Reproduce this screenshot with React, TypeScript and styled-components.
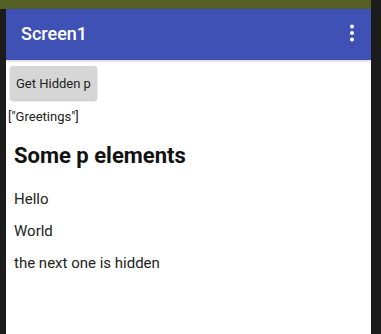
import React from 'react';
import styled, { createGlobalStyle } from 'styled-components';

const GlobalStyle = createGlobalStyle`
  html, body {
    margin: 0;
    padding: 0;
    background: #1c1c1c;
  }
  body {
    font-family: Roboto, "Liberation Sans", sans-serif;
  }
`;

const Frame = styled.div`
  width: 381px;
  height: 334px;
  display: flex;
  flex-direction: column;
  overflow: hidden;
`;

const StatusBar = styled.div`
  height: 9px;
  width: 371px;
  background: #556124;
  flex-shrink: 0;
`;

const Body = styled.div`
  flex: 1;
  display: flex;
  padding-left: 6px;
  padding-right: 10px;
`;

const Screen = styled.div`
  flex: 1;
  display: flex;
  flex-direction: column;
  background: #ffffff;
`;

const AppBar = styled.div`
  height: 51px;
  background: #3f51b5;
  display: flex;
  align-items: center;
  justify-content: space-between;
  padding: 0 16px 0 15px;
  box-shadow: 0 1px 3px rgba(0, 0, 0, 0.2);
  position: relative;
  z-index: 1;
`;

const Title = styled.span`
  color: #ffffff;
  font-size: 18px;
  font-weight: 500;
  padding-bottom: 2px;
`;

const MenuButton = styled.div`
  display: flex;
  align-items: center;
  padding-bottom: 3px;
`;

const Content = styled.div`
  flex: 1;
  padding: 6px 0 0 2px;
  color: #212121;
`;

const HiddenButton = styled.button`
  margin-left: 2px;
  height: 34px;
  padding: 0 6px;
  border: none;
  border-radius: 3px;
  background: #d6d6d6;
  box-shadow: 0 1px 2px rgba(0, 0, 0, 0.25);
  font-family: Roboto, "Liberation Sans", sans-serif;
  font-size: 13px;
  color: #222222;
`;

const Output = styled.div`
  font-size: 13px;
  color: #222222;
  margin-top: 9px;
`;

const Section = styled.div`
  padding-left: 6px;
`;

const Heading = styled.h2`
  margin: 19px 0 0;
  font-size: 22px;
  font-weight: 700;
  color: #111111;
  line-height: 26px;
`;

const Para = styled.p`
  margin: 0;
  font-size: 15px;
  line-height: 18px;
  color: #222222;
  margin-top: 14px;

  &:first-of-type {
    margin-top: 21px;
  }
`;

const Kebab = () => (
  <svg width="6" height="18" viewBox="0 0 6 18" fill="#ffffff">
    <circle cx="3" cy="2.5" r="2" />
    <circle cx="3" cy="9" r="2" />
    <circle cx="3" cy="15.5" r="2" />
  </svg>
);

export default function App() {
  return (
    <>
      <GlobalStyle />
      <Frame>
        <StatusBar />
        <Body>
          <Screen>
            <AppBar>
              <Title>Screen1</Title>
              <MenuButton>
                <Kebab />
              </MenuButton>
            </AppBar>
            <Content>
              <HiddenButton>Get Hidden p</HiddenButton>
              <Output>["Greetings"]</Output>
              <Section>
                <Heading>Some p elements</Heading>
                <Para>Hello</Para>
                <Para>World</Para>
                <Para>the next one is hidden</Para>
              </Section>
            </Content>
          </Screen>
        </Body>
      </Frame>
    </>
  );
}
